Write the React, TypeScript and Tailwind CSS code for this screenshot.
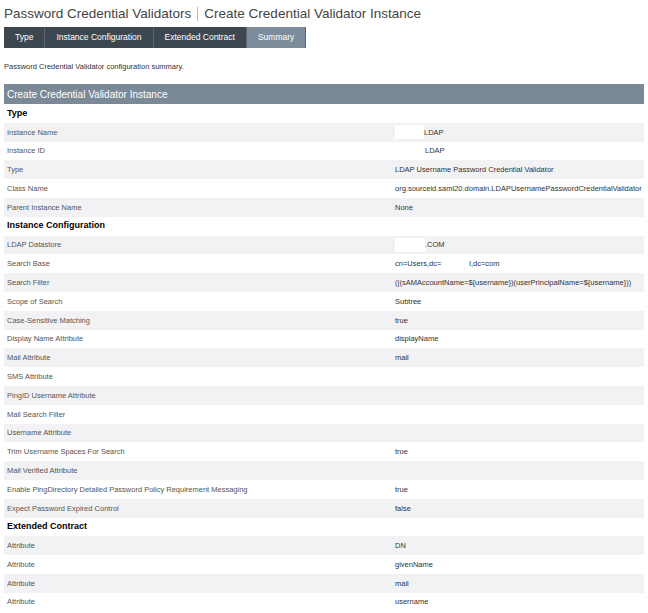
type Row = { label: string; value?: React.ReactNode };

const mask = (w: string) => <span className={`inline-block h-[14px] bg-white align-middle ${w}`} />;

const sections: { title: string; rows: Row[] }[] = [
  {
    title: "Type",
    rows: [
      { label: "Instance Name", value: <>{mask("w-[29px]")}LDAP</> },
      { label: "Instance ID", value: <span className="pl-[30px]">LDAP</span> },
      { label: "Type", value: "LDAP Username Password Credential Validator" },
      { label: "Class Name", value: "org.sourceid.saml20.domain.LDAPUsernamePasswordCredentialValidator" },
      { label: "Parent Instance Name", value: "None" },
    ],
  },
  {
    title: "Instance Configuration",
    rows: [
      { label: "LDAP Datastore", value: <>{mask("w-[30px]")}.COM</> },
      { label: "Search Base", value: <>cn=Users,dc=<span className="inline-block w-[28px]" />l,dc=com</> },
      { label: "Search Filter", value: "(|(sAMAccountName=${username})(userPrincipalName=${username}))" },
      { label: "Scope of Search", value: "Subtree" },
      { label: "Case-Sensitive Matching", value: "true" },
      { label: "Display Name Attribute", value: "displayName" },
      { label: "Mail Attribute", value: "mail" },
      { label: "SMS Attribute" },
      { label: "PingID Username Attribute" },
      { label: "Mail Search Filter" },
      { label: "Username Attribute" },
      { label: "Trim Username Spaces For Search", value: "true" },
      { label: "Mail Verified Attribute" },
      { label: "Enable PingDirectory Detailed Password Policy Requirement Messaging", value: "true" },
      { label: "Expect Password Expired Control", value: "false" },
    ],
  },
  {
    title: "Extended Contract",
    rows: [
      { label: "Attribute", value: "DN" },
      { label: "Attribute", value: "givenName" },
      { label: "Attribute", value: "mail" },
      { label: "Attribute", value: "username" },
    ],
  },
];

const tabs = ["Type", "Instance Configuration", "Extended Contract", "Summary"];

export default function App() {
  return (
    <div className="w-[648px] h-[613px] overflow-hidden bg-white px-[4px] text-[#333]" style={{ fontFamily: '"Liberation Sans", Arial, sans-serif' }}>
      <div className="flex items-center pt-[5px] text-[13.5px] text-[#444] h-[23px]">
        <span>Password Credential Validators</span>
        <span className="mx-[6px] h-[14px] w-px bg-[#bbb]" />
        <span>Create Credential Validator Instance</span>
      </div>
      <div className="mt-[4px] flex h-[21px] text-[8.5px] text-white">
        {tabs.map((t, i) => (
          <div
            key={t}
            className={`flex items-center px-[11px] border-r border-[#5a6670] ${i === 3 ? "bg-[#7c8c9b]" : "bg-[#3d4750]"}`}
          >
            {t}
          </div>
        ))}
      </div>
      <div className="mt-[13px] text-[7.5px] h-[12px]">Password Credential Validator configuration summary.</div>
      <div className="mt-[11px] flex h-[20px] items-center bg-[#7b8997] px-[3px] text-[10px] text-white">
        Create Credential Validator Instance
      </div>
      {sections.map((s) => (
        <div key={s.title}>
          <div className="flex h-[18.8px] items-center px-[3px] text-[9px] font-bold text-black">{s.title}</div>
          {s.rows.map((r, i) => (
            <div key={i} className={`flex h-[18.8px] items-center text-[7.5px] ${i % 2 === 0 ? "bg-[#f2f2f4]" : "bg-white"}`}>
              <div className="w-[391px] pl-[3px] text-[#555]">{r.label}</div>
              <div className="flex items-center text-[#333]">{r.value}</div>
            </div>
          ))}
        </div>
      ))}
    </div>
  );
}
